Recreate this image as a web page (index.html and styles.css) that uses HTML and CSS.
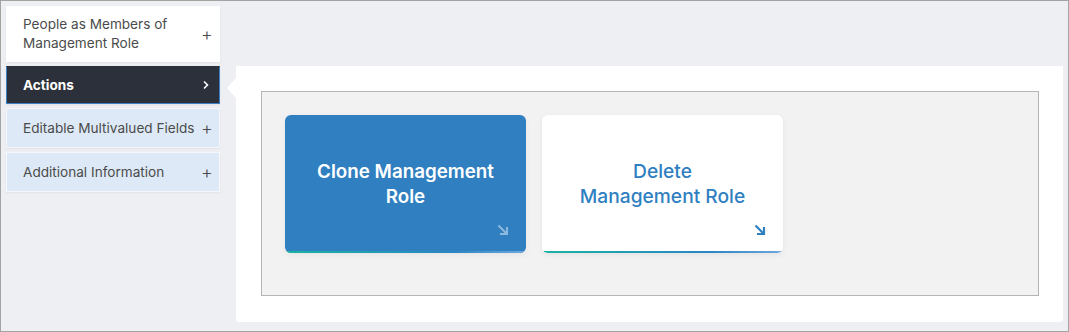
FILE: index.html
```html
<!DOCTYPE html>
<html>

<head>
  <title>Management Role</title>
  <link rel="stylesheet" href="styles.css">
</head>

<body>
  <div class="frame">
    <ul class="side-menu">
      <li class="menu-item plain">
        <span>People as Members of Management Role</span>
        <span class="sign">+</span>
      </li>
      <li class="menu-item active">
        <span>Actions</span>
        <svg class="chevron" viewBox="0 0 8 10" width="8" height="10">
          <path d="M2 1.5 L5.5 5 L2 8.5" fill="none" stroke="currentColor" stroke-width="1.6" />
        </svg>
      </li>
      <li class="menu-item">
        <span>Editable Multivalued Fields</span>
        <span class="sign">+</span>
      </li>
      <li class="menu-item">
        <span>Additional Information</span>
        <span class="sign">+</span>
      </li>
    </ul>

    <div class="panel">
      <div class="action-box">
        <a class="action-card primary" href="#">
          <span>Clone Management Role</span>
          <svg class="go" viewBox="0 0 12 12" width="12" height="12">
            <path d="M1.5 1.5 L10 10 M3 10 H10 V3" fill="none" stroke="currentColor" stroke-width="2" />
          </svg>
        </a>
        <a class="action-card" href="#">
          <span>Delete<br>Management Role</span>
          <svg class="go" viewBox="0 0 12 12" width="12" height="12">
            <path d="M1.5 1.5 L10 10 M3 10 H10 V3" fill="none" stroke="currentColor" stroke-width="2.2" />
          </svg>
        </a>
      </div>
    </div>
  </div>
</body>

</html>
```

FILE: styles.css
```css
body {
  margin: 0;
  font-family: "Inter", "Roboto", sans-serif;
}

.frame {
  box-sizing: border-box;
  width: 1069px;
  height: 332px;
  border: 1px solid #a3a3a3;
  background-color: #eeeff3;
  padding: 5px;
  display: flex;
  gap: 16px;
}

.side-menu {
  list-style: none;
  margin: 0;
  padding: 0;
  width: 214px;
  flex-shrink: 0;
  display: flex;
  flex-direction: column;
  gap: 4px;
}

.menu-item {
  box-sizing: border-box;
  display: flex;
  align-items: center;
  justify-content: space-between;
  gap: 4px;
  min-height: 40px;
  padding: 6px 7px 6px 16px;
  background-color: #dde9f6;
  border: 1px solid #f4f8fc;
  color: #4b4b4b;
  font-size: 13.6px;
  line-height: 19px;
  box-shadow: 0 1px 2px rgba(0, 0, 0, 0.06);
}

.menu-item.plain {
  background-color: #fff;
  border-color: #fff;
  min-height: 56px;
}

.menu-item.active {
  background-color: #2b303a;
  border: 1px solid #2b303a;
  border-left-color: #3a80c2;
  border-right-color: #3a80c2;
  border-bottom-color: #3a80c2;
  color: #fff;
  font-weight: 700;
  min-height: 38px;
}

.sign {
  font-size: 18px;
  font-weight: 300;
  width: 11px;
  text-align: center;
  flex-shrink: 0;
}

.chevron {
  margin-right: 2px;
  flex-shrink: 0;
}

.panel {
  position: relative;
  flex: 1;
  margin-top: 60px;
  margin-bottom: 4px;
  background-color: #fff;
  border-radius: 0 0 3px 3px;
  padding: 25px 24px 26px 25px;
  display: flex;
}

.panel::before {
  content: "";
  position: absolute;
  left: -9px;
  top: 12px;
  border-top: 10px solid transparent;
  border-bottom: 10px solid transparent;
  border-right: 9px solid #fff;
}

.action-box {
  flex: 1;
  border: 1px solid #b5b5b5;
  background-color: #f2f2f2;
  padding: 23px;
  display: flex;
  align-items: flex-start;
  gap: 16px;
}

.action-card {
  position: relative;
  box-sizing: border-box;
  width: 241px;
  height: 138px;
  border-radius: 6px;
  background-color: #fff;
  color: #2f7fc1;
  text-decoration: none;
  font-size: 19.2px;
  font-weight: 500;
  line-height: 25px;
  text-align: center;
  display: flex;
  align-items: center;
  justify-content: center;
  padding: 0 20px;
  box-shadow: 0 2px 6px rgba(0, 0, 0, 0.06);
  overflow: hidden;
}

.action-card::after {
  content: "";
  position: absolute;
  left: 0;
  right: 0;
  bottom: 0;
  height: 2px;
  background: linear-gradient(to right, #19b3a3, #2a86c4 70%, #6fa8dc);
}

.action-card.primary {
  background-color: #2f7fc1;
  color: #fff;
  font-size: 18.8px;
  font-weight: 600;
}

.go {
  position: absolute;
  right: 17px;
  bottom: 17px;
  color: #2f7fc1;
}

.primary .go {
  color: rgba(255, 255, 255, 0.45);
}
```
